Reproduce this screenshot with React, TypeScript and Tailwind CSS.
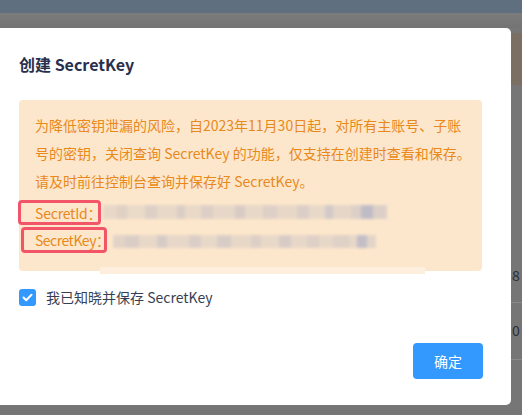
import React from "react";

const idBlocks: [number, string][] = [
  [14, "#e6d6c6"], [10, "#dccfc4"], [18, "#e8d9c8"], [12, "#d9cdc6"], [20, "#e5d7c8"], [8, "#d6cbc6"], [16, "#e7d8c7"], [12, "#dacdc5"], [22, "#e4d6c8"], [10, "#d4c9c6"], [18, "#e6d7c7"], [14, "#dbcec6"], [20, "#e5d6c7"], [12, "#d8ccc6"], [16, "#e6d7c8"], [8, "#cfc6c8"], [18, "#e3d5c8"], [10, "#d9cdc6"], [12, "#b9b8c6"], [14, "#d8cdc8"],
];
const keyBlocks: [number, string][] = [
  [12, "#dfd1c6"], [14, "#d6cbc6"], [18, "#e6d7c7"], [10, "#d3c9c7"], [22, "#e4d6c8"], [12, "#d8ccc6"], [16, "#e6d7c7"], [14, "#d5cac6"], [20, "#e5d6c7"], [10, "#d9cdc6"], [18, "#e6d7c7"], [12, "#d4c9c6"], [16, "#e4d6c8"], [12, "#dbcec6"], [14, "#e5d6c7"], [16, "#dccfc6"], [8, "#e4d6c8"], [10, "#bdbac6"], [9, "#e0d3c8"],
];

function Blur({ blocks, h }: { blocks: [number, string][]; h: string }) {
  return (
    <div className={`flex ${h} blur-[1.5px] opacity-90`}>
      {blocks.map(([w, c], i) => (
        <div key={i} style={{ width: w, background: c }} className="h-full shrink-0" />
      ))}
    </div>
  );
}

export default function App() {
  return (
    <div
      className="relative w-[522px] h-[415px] overflow-hidden bg-[#767676]"
      style={{ fontFamily: '"Noto Sans CJK SC", "Noto Sans", sans-serif' }}
    >
      <div className="h-[13px] bg-[#5f6f80]" />
      <div className="h-[15px] bg-gradient-to-b from-[#7b7b7b] to-[#747474]" />
      {/* background strip on the right */}
      <div className="absolute left-[511px] top-[33px] w-[11px] h-[52px] bg-[#7b6f63]" />
      <div className="absolute left-[511px] top-[302px] w-[11px] h-px bg-[#8a8a8a]" />
      <div className="absolute left-[511px] top-[359px] w-[11px] h-px bg-[#8a8a8a]" />
      <div className="absolute left-[512px] top-[265px] text-[14px] leading-[20px] text-[#2a2f3a]">8</div>
      <div className="absolute left-[512px] top-[320px] text-[14px] leading-[20px] text-[#2a2f3a]">0</div>

      {/* modal */}
      <div className="absolute left-[-10px] top-[28px] w-[521px] h-[377px] bg-white rounded-[5px] pl-[29px] pt-[24px]">
        <div className="text-[16px] font-bold leading-[24px] text-[#29304d]">创建 SecretKey</div>
        <div className="relative mt-[24px] w-[463px] h-[171px] rounded-[4px] bg-[#fde7cc] pl-[16px] pt-[11px] text-[14px] text-[#e8891a]">
          <div className="leading-[28px] whitespace-nowrap">
            为降低密钥泄漏的风险，自2023年11月30日起，对所有主账号、子账
            <br />
            号的密钥，关闭查询 SecretKey 的功能，仅支持在创建时查看和保存。
            <br />
            请及时前往控制台查询并保存好 SecretKey。
          </div>
          <div className="flex items-center mt-[5px] ml-[-17px]">
            <div className="shrink-0 w-[83px] h-[25px] border-[3px] border-[#f25568] rounded-[4px] pl-[14px] flex items-center leading-none whitespace-nowrap tracking-[-0.2px]">
              SecretId：
            </div>
            <div className="ml-[2px] mt-[-2px]">
              <Blur blocks={idBlocks} h="h-[14px]" />
            </div>
          </div>
          <div className="flex items-center mt-[2px] ml-[-14px]">
            <div className="shrink-0 w-[86px] h-[26px] border-[3px] border-[#f25568] rounded-[4px] pl-[11px] flex items-center leading-none whitespace-nowrap tracking-[-0.5px]">
              SecretKey：
            </div>
            <div className="ml-[6px] mt-[2px]">
              <Blur blocks={keyBlocks} h="h-[13px]" />
            </div>
          </div>
          <div className="absolute left-[81px] top-[167px] w-[325px] h-[7px] bg-[#fdeedd]" />
        </div>
        <div className="flex items-center mt-[16px] h-[20px]">
          <div className="w-[17px] h-[17px] rounded-[3px] bg-[#3399ff] flex items-center justify-center">
            <svg width="11" height="9" viewBox="0 0 11 9" fill="none">
              <path d="M1.5 4.5L4.2 7.2L9.5 1.8" stroke="white" strokeWidth="2" strokeLinecap="round" strokeLinejoin="round" />
            </svg>
          </div>
          <span className="ml-[10px] text-[14px] text-[#373e52]">我已知晓并保存 SecretKey</span>
        </div>
        <div className="flex justify-start pl-[394px] mt-[36px]">
          <button className="w-[70px] h-[36px] rounded-[4px] bg-[#3399ff] text-white text-[14px] flex items-center justify-center">
            确定
          </button>
        </div>
      </div>
    </div>
  );
}
